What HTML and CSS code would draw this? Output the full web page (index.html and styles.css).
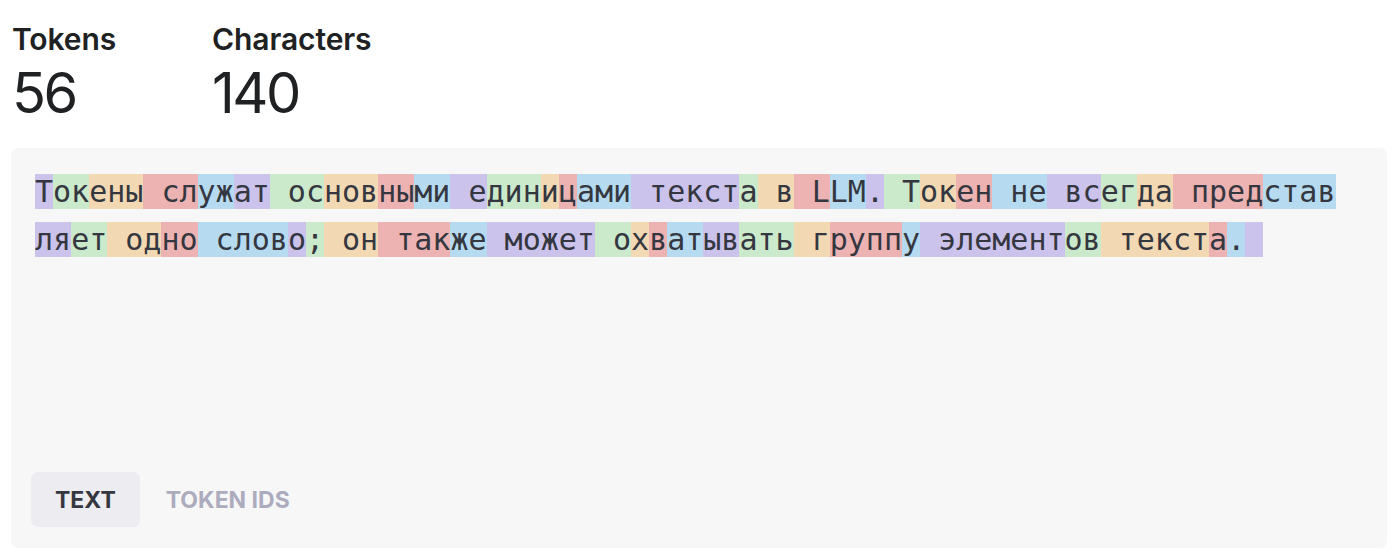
FILE: index.html
```html
<!DOCTYPE html>
<html lang="ru">
<head>
<meta charset="utf-8">
<title>Tokenizer</title>
<link rel="stylesheet" href="styles.css">
</head>
<body>
<main class="page">
  <section class="stats">
    <div class="stat">
      <div class="stat-label">Tokens</div>
      <div class="stat-value">56</div>
    </div>
    <div class="stat">
      <div class="stat-label">Characters</div>
      <div class="stat-value">140</div>
    </div>
  </section>
  <section class="panel">
    <div class="tokens"><span class="t c0">Т</span><span class="t c1">ок</span><span class="t c2">ены</span><span class="t c3"> сл</span><span class="t c4">уж</span><span class="t c0">ат</span><span class="t c1"> ос</span><span class="t c2">нов</span><span class="t c3">ны</span><span class="t c4">ми</span><span class="t c0"> е</span><span class="t c1">дин</span><span class="t c2">и</span><span class="t c3">ц</span><span class="t c4">ами</span><span class="t c0"> текст</span><span class="t c1">а</span><span class="t c2"> в</span><span class="t c3"> L</span><span class="t c4">LM</span><span class="t c0">.</span><span class="t c1"> Т</span><span class="t c2">ок</span><span class="t c3">ен</span><span class="t c4"> не</span><span class="t c0"> вс</span><span class="t c1">ег</span><span class="t c2">да</span><span class="t c3"> пред</span><span class="t c4">став</span><span class="t c0">ля</span><span class="t c1">ет</span><span class="t c2"> од</span><span class="t c3">но</span><span class="t c4"> слов</span><span class="t c0">о</span><span class="t c1">;</span><span class="t c2"> он</span><span class="t c3"> так</span><span class="t c4">же</span><span class="t c0"> может</span><span class="t c1"> о</span><span class="t c2">х</span><span class="t c3">в</span><span class="t c4">ат</span><span class="t c0">ыв</span><span class="t c1">ать</span><span class="t c2"> г</span><span class="t c3">рупп</span><span class="t c4">у</span><span class="t c0"> элемент</span><span class="t c1">ов</span><span class="t c2"> текст</span><span class="t c3">а</span><span class="t c4">.</span><span class="t c0">&nbsp;</span></div>
    <div class="tabs">
      <button class="tab active">TEXT</button>
      <button class="tab">TOKEN IDS</button>
    </div>
  </section>
</main>
</body>
</html>
```
FILE: styles.css
```css
* { box-sizing: border-box; }
html, body { margin: 0; padding: 0; background: #ffffff; }
body {
  font-family: Inter, "Noto Sans", "Liberation Sans", sans-serif;
  color: #202123;
}
.page {
  padding: 21px 7px 0 11px;
}
.stats {
  display: flex;
  padding-left: 1px;
}
.stat {
  width: 200px;
}
.stat-label {
  font-size: 30px;
  line-height: 36px;
  font-weight: 600;
  letter-spacing: -0.1px;
  color: #202123;
}
.stat-value {
  margin-top: 8px;
  font-size: 56px;
  line-height: 56px;
  font-weight: 400;
  letter-spacing: -2.5px;
  color: #202123;
}
.panel {
  margin-top: 27px;
  height: 400px;
  background: #f7f7f8;
  border-radius: 7px;
  padding: 20px 24px 21px 24px;
  display: flex;
  flex-direction: column;
}
.tokens {
  flex: 1;
  width: 1310px;
  font-family: "DejaVu Sans Mono", "Liberation Mono", monospace;
  font-size: 30px;
  line-height: 48px;
  color: #353740;
  white-space: pre-wrap;
  word-break: break-all;
}
.c0 { background: #cbc3ec; }
.c1 { background: #cbe9cb; }
.c2 { background: #f2d9b4; }
.c3 { background: #edb3b3; }
.c4 { background: #b6dbf1; }
.tabs {
  display: flex;
  gap: 2px;
  margin-left: -4px;
}
.tab {
  height: 55px;
  padding: 0 24px;
  border: 0;
  border-radius: 7px;
  background: transparent;
  font-family: Inter, "Noto Sans", "Liberation Sans", sans-serif;
  font-size: 23px;
  font-weight: 700;
  letter-spacing: 0;
  color: #acacbe;
}
.tab.active {
  background: #ececf1;
  color: #353740;
}
```
